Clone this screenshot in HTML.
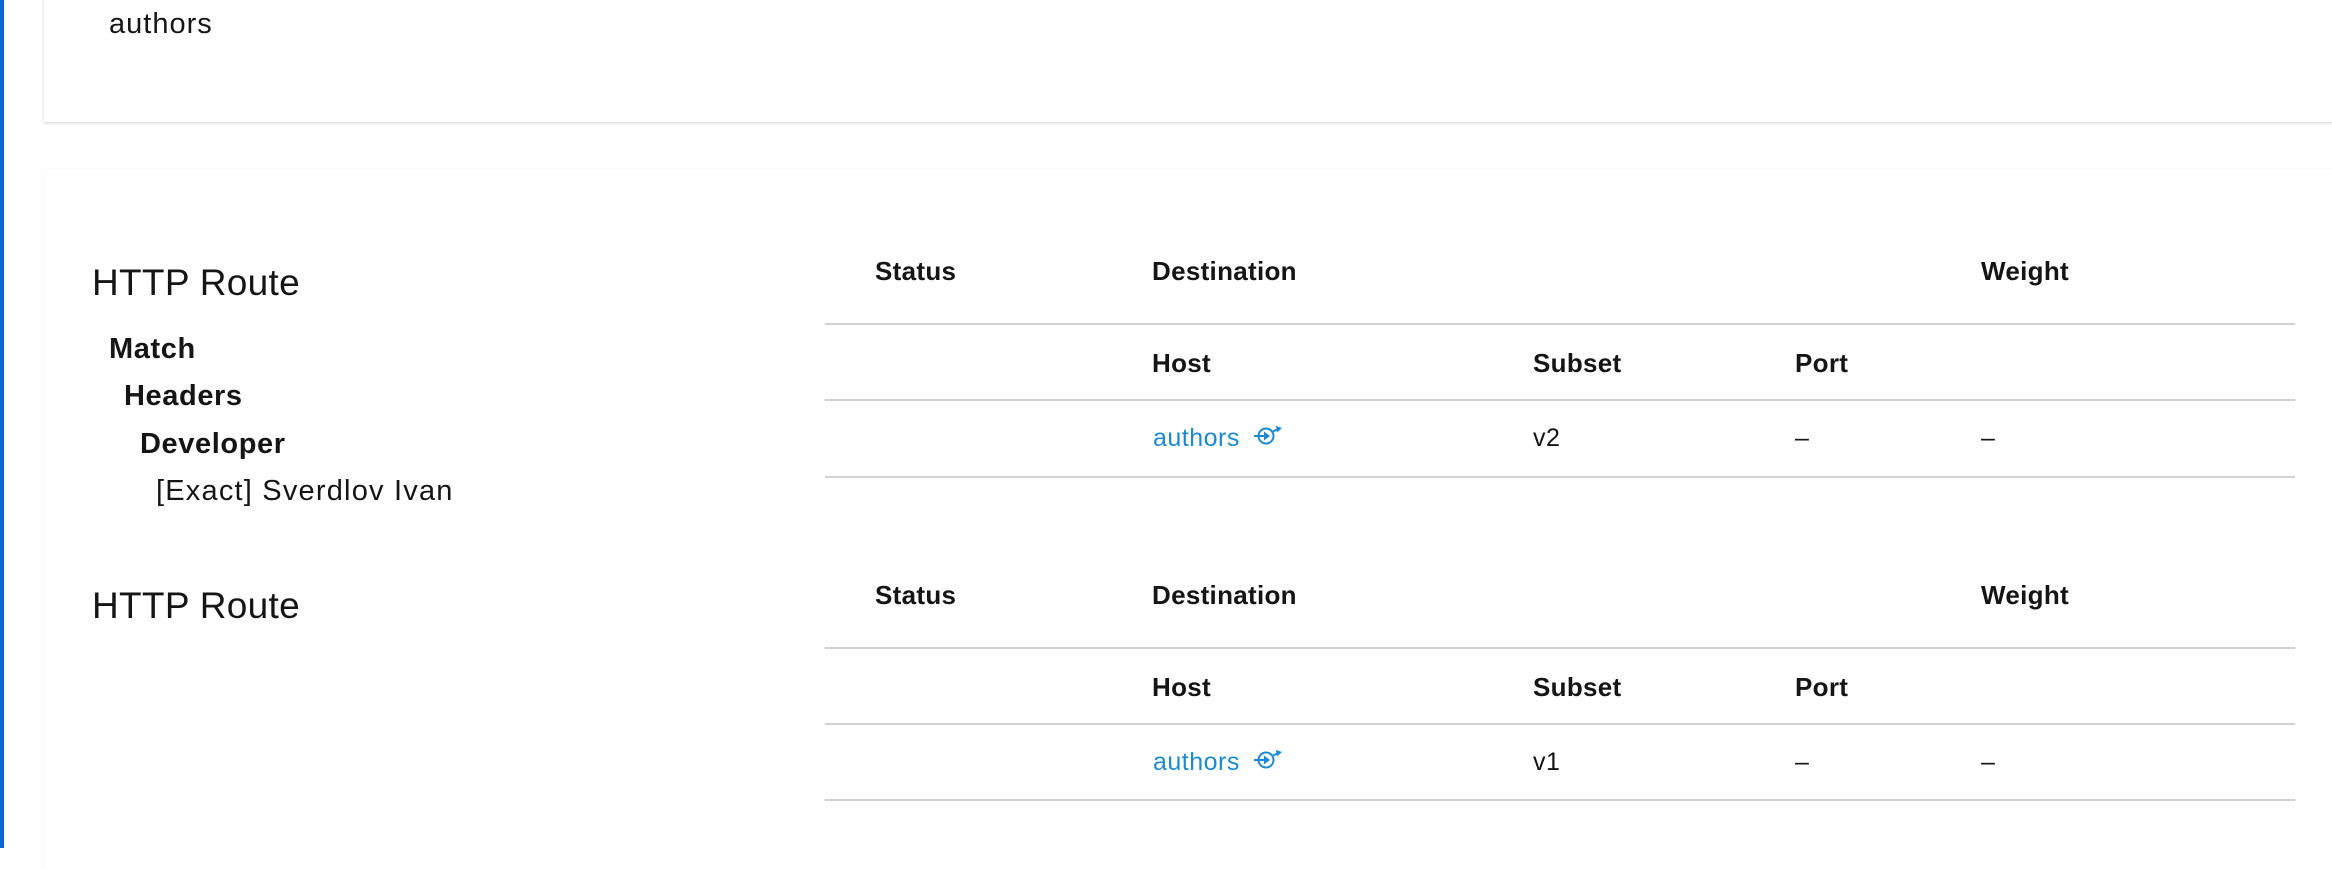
<!DOCTYPE html>
<html><head><meta charset="utf-8"><style>
html,body{margin:0;padding:0}
body{width:2332px;height:848px;position:relative;overflow:hidden;background:#fff;font-family:"Liberation Sans",sans-serif;color:#151515}
.t{position:absolute;white-space:nowrap;line-height:1}
.bar{position:absolute;left:0;top:0;width:4px;height:848px;background:#0a66cc}
.card{position:absolute;background:#fff}
.l{position:absolute;left:825px;width:1470px;height:2px;background:#d2d2d2}
.b{font-weight:bold}
.th{font-size:26px;font-weight:bold;letter-spacing:.3px}
.td{font-size:25px;letter-spacing:.5px}
.a{color:#1b8ad4}
</style></head><body>
<div class="bar"></div>
<div class="card" style="left:44px;top:-10px;width:2300px;height:132px;box-shadow:0 1px 3px rgba(0,0,0,.18)"></div>
<div class="card" style="left:44px;top:169px;width:2300px;height:700px;box-shadow:0 0 2px rgba(0,0,0,.06)"></div>

<div class="t" style="left:109px;top:10px;font-size:29px;letter-spacing:1px">authors</div>

<div class="t" style="left:92px;top:264px;font-size:37px;letter-spacing:.3px">HTTP Route</div>
<div class="t b" style="left:109px;top:335px;font-size:29px;letter-spacing:.6px">Match</div>
<div class="t b" style="left:124px;top:382px;font-size:29px;letter-spacing:.6px">Headers</div>
<div class="t b" style="left:140px;top:430px;font-size:29px;letter-spacing:.6px">Developer</div>
<div class="t" style="left:156px;top:477px;font-size:29px;letter-spacing:1.2px">[Exact] Sverdlov Ivan</div>
<div class="t" style="left:92px;top:587px;font-size:37px;letter-spacing:.3px">HTTP Route</div>

<!-- table 1 -->
<div class="t th" style="left:875px;top:258px">Status</div>
<div class="t th" style="left:1152px;top:258px">Destination</div>
<div class="t th" style="left:1981px;top:258px">Weight</div>
<div class="l" style="top:323px"></div>
<div class="t th" style="left:1152px;top:350px">Host</div>
<div class="t th" style="left:1533px;top:350px">Subset</div>
<div class="t th" style="left:1795px;top:350px">Port</div>
<div class="l" style="top:399px"></div>
<div class="t td a" style="left:1153px;top:426px">authors</div>
<svg style="position:absolute;left:1252px;top:424px" width="32" height="24" viewBox="0 0 32 24"><circle cx="14" cy="12" r="7.5" fill="none" stroke="#1b8ad4" stroke-width="2"/><path d="M2 12H13" stroke="#1b8ad4" stroke-width="2"/><path d="M12 7.5L18 12L12 16.5Z" fill="#1b8ad4"/><path d="M20 8L26 5" stroke="#1b8ad4" stroke-width="2"/><path d="M24 2L30 4L25 8.5Z" fill="#1b8ad4"/></svg>
<div class="t td" style="left:1533px;top:426px">v2</div>
<div class="t td" style="left:1795px;top:426px">–</div>
<div class="t td" style="left:1981px;top:426px">–</div>
<div class="l" style="top:476px"></div>

<!-- table 2 -->
<div class="t th" style="left:875px;top:582px">Status</div>
<div class="t th" style="left:1152px;top:582px">Destination</div>
<div class="t th" style="left:1981px;top:582px">Weight</div>
<div class="l" style="top:647px"></div>
<div class="t th" style="left:1152px;top:674px">Host</div>
<div class="t th" style="left:1533px;top:674px">Subset</div>
<div class="t th" style="left:1795px;top:674px">Port</div>
<div class="l" style="top:723px"></div>
<div class="t td a" style="left:1153px;top:750px">authors</div>
<svg style="position:absolute;left:1252px;top:748px" width="32" height="24" viewBox="0 0 32 24"><circle cx="14" cy="12" r="7.5" fill="none" stroke="#1b8ad4" stroke-width="2"/><path d="M2 12H13" stroke="#1b8ad4" stroke-width="2"/><path d="M12 7.5L18 12L12 16.5Z" fill="#1b8ad4"/><path d="M20 8L26 5" stroke="#1b8ad4" stroke-width="2"/><path d="M24 2L30 4L25 8.5Z" fill="#1b8ad4"/></svg>
<div class="t td" style="left:1533px;top:750px">v1</div>
<div class="t td" style="left:1795px;top:750px">–</div>
<div class="t td" style="left:1981px;top:750px">–</div>
<div class="l" style="top:799px"></div>
</body></html>
